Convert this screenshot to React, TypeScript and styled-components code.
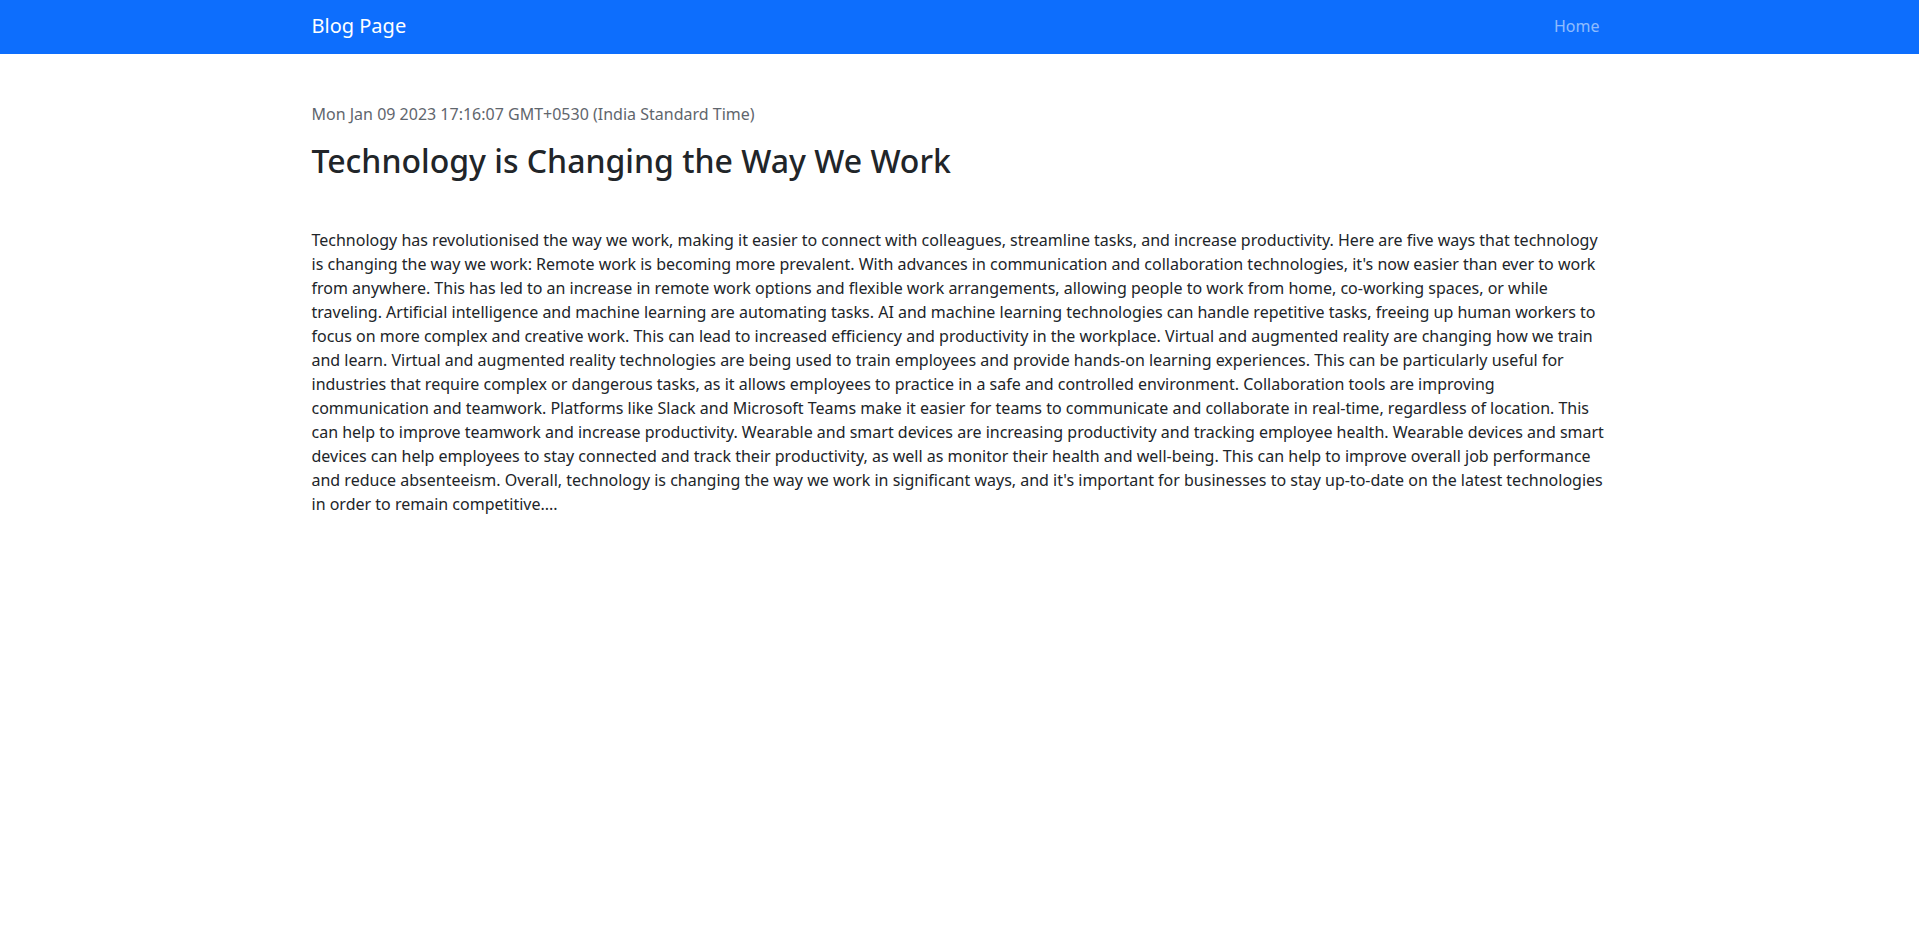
import styled, { createGlobalStyle } from "styled-components";

const GlobalStyle = createGlobalStyle`
  *, *::before, *::after {
    box-sizing: border-box;
  }

  body {
    margin: 0;
    font-family: "Noto Sans", "Liberation Sans", sans-serif;
    font-size: 16px;
    line-height: 1.5;
    color: #212529;
    background: #fff;
  }
`;

const Navbar = styled.nav`
  background-color: #0d6efd;
  height: 54px;
  display: flex;
  align-items: center;
`;

const Container = styled.div`
  width: 100%;
  max-width: 1320px;
  margin: 0 auto;
  padding: 0 12px;
`;

const NavInner = styled(Container)`
  display: flex;
  align-items: center;
  justify-content: space-between;
  margin-top: -2px;
`;

const Brand = styled.a`
  color: #fff;
  font-size: 20px;
  line-height: 30px;
  text-decoration: none;
`;

const NavLink = styled.a`
  color: rgba(255, 255, 255, 0.55);
  font-size: 16px;
  line-height: 24px;
  padding: 8px;
  text-decoration: none;
`;

const Article = styled(Container)`
  padding-top: 48px;
`;

const PostDate = styled.p`
  margin: 0 0 16px;
  color: #5f666d;
  font-size: 16px;
`;

const Title = styled.h2`
  margin: 0 0 48px;
  font-size: 32px;
  font-weight: 500;
  line-height: 1.2;
`;

const Body = styled.p`
  margin: 0;
`;

const text =
  "Technology has revolutionised the way we work, making it easier to connect with colleagues, streamline tasks, and increase productivity. Here are five ways that technology is changing the way we work: Remote work is becoming more prevalent. With advances in communication and collaboration technologies, it's now easier than ever to work from anywhere. This has led to an increase in remote work options and flexible work arrangements, allowing people to work from home, co-working spaces, or while traveling. Artificial intelligence and machine learning are automating tasks. AI and machine learning technologies can handle repetitive tasks, freeing up human workers to focus on more complex and creative work. This can lead to increased efficiency and productivity in the workplace. Virtual and augmented reality are changing how we train and learn. Virtual and augmented reality technologies are being used to train employees and provide hands-on learning experiences. This can be particularly useful for industries that require complex or dangerous tasks, as it allows employees to practice in a safe and controlled environment. Collaboration tools are improving communication and teamwork. Platforms like Slack and Microsoft Teams make it easier for teams to communicate and collaborate in real-time, regardless of location. This can help to improve teamwork and increase productivity. Wearable and smart devices are increasing productivity and tracking employee health. Wearable devices and smart devices can help employees to stay connected and track their productivity, as well as monitor their health and well-being. This can help to improve overall job performance and reduce absenteeism. Overall, technology is changing the way we work in significant ways, and it's important for businesses to stay up-to-date on the latest technologies in order to remain competitive....";

const App = () => {
  return (
    <>
      <GlobalStyle />
      <Navbar>
        <NavInner>
          <Brand href="#">Blog Page</Brand>
          <NavLink href="#">Home</NavLink>
        </NavInner>
      </Navbar>
      <Article>
        <PostDate>Mon Jan 09 2023 17:16:07 GMT+0530 (India Standard Time)</PostDate>
        <Title>Technology is Changing the Way We Work</Title>
        <Body>{text}</Body>
      </Article>
    </>
  );
};

export default App;
